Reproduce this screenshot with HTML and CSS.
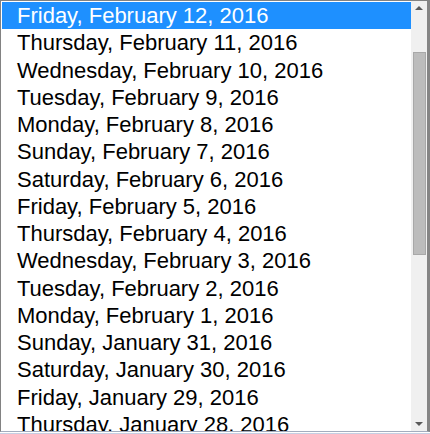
FILE: index.html
```html
<!DOCTYPE html>
<html>
<head>
<meta charset="utf-8">
<link rel="stylesheet" href="styles.css">
</head>
<body>
<div class="box">
  <div class="list">
    <div class="opt sel">Friday, February 12, 2016</div>
    <div class="opt">Thursday, February 11, 2016</div>
    <div class="opt">Wednesday, February 10, 2016</div>
    <div class="opt">Tuesday, February 9, 2016</div>
    <div class="opt">Monday, February 8, 2016</div>
    <div class="opt">Sunday, February 7, 2016</div>
    <div class="opt">Saturday, February 6, 2016</div>
    <div class="opt">Friday, February 5, 2016</div>
    <div class="opt">Thursday, February 4, 2016</div>
    <div class="opt">Wednesday, February 3, 2016</div>
    <div class="opt">Tuesday, February 2, 2016</div>
    <div class="opt">Monday, February 1, 2016</div>
    <div class="opt">Sunday, January 31, 2016</div>
    <div class="opt">Saturday, January 30, 2016</div>
    <div class="opt">Friday, January 29, 2016</div>
    <div class="opt">Thursday, January 28, 2016</div>
  </div>
  <div class="scroll">
    <div class="arrow up"></div>
    <div class="track"><div class="thumb"></div></div>
    <div class="arrow down"></div>
  </div>
</div>
<div class="foot"></div>
</body>
</html>
```
FILE: styles.css
```css
html, body {
  margin: 0;
  padding: 0;
  background: #ffffff;
}
body {
  width: 430px;
  height: 434px;
  overflow: hidden;
}
.box {
  box-sizing: border-box;
  width: 430px;
  height: 432px;
  display: flex;
  border-top: 1px solid #828282;
  border-left: 1px solid #828282;
  border-right: 3px solid #858585;
  border-bottom: 1px solid #a4adbf;
  background: #ffffff;
}
.list {
  flex: 1;
  overflow: hidden;
  padding: 1px 0 0 1px;
  font-family: "Liberation Sans", Arial, sans-serif;
  font-size: 22px;
  color: #000000;
}
.opt {
  height: 27.27px;
  line-height: 27.27px;
  padding-left: 15px;
  white-space: nowrap;
}
.opt.sel {
  background: #1e90ff;
  color: #ffffff;
}
.scroll {
  width: 16px;
  background: #f0f0f0;
  display: flex;
  flex-direction: column;
  align-items: center;
}
.arrow {
  width: 0;
  height: 0;
  border-left: 4px solid transparent;
  border-right: 4px solid transparent;
}
.arrow.up {
  margin-top: 5px;
  border-bottom: 4px solid #5a5a5a;
}
.arrow.down {
  margin-bottom: 5px;
  border-top: 4px solid #5a5a5a;
}
.track {
  flex: 1;
  width: 100%;
  display: flex;
  justify-content: center;
  padding-top: 42px;
}
.thumb {
  box-sizing: border-box;
  width: 13px;
  height: 203px;
  background: #bcbcbc;
  border: 1px solid #a8a8a8;
}
.foot {
  height: 2px;
  border-bottom: 1px solid #c5cfe3;
  box-sizing: border-box;
}
```
